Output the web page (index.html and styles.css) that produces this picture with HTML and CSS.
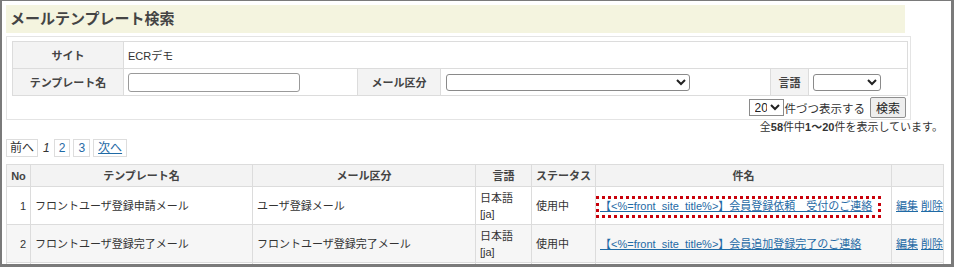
FILE: index.html
```html
<!DOCTYPE html>
<html lang="ja">
<head>
    <meta charset="UTF-8">
    <title>メールテンプレート検索</title>
    <link rel="stylesheet" href="styles.css">
</head>
<body>
    <div class="frame">
        <h1 class="page-title">メールテンプレート検索</h1>

        <div class="search-box">
            <table class="search-table">
                <colgroup>
                    <col class="w-name">
                    <col class="w-input">
                    <col class="w-kind">
                    <col class="w-kind-sel">
                    <col class="w-lang">
                    <col class="w-lang-sel">
                </colgroup>
                <tr>
                    <th>サイト</th>
                    <td colspan="5">ECRデモ</td>
                </tr>
                <tr>
                    <th>テンプレート名</th>
                    <td><input type="text" class="text-input"></td>
                    <th>メール区分</th>
                    <td><select class="kind-select"><option></option></select></td>
                    <th>言語</th>
                    <td><select class="lang-select"><option></option></select></td>
                </tr>
            </table>
            <div class="search-actions">
                <select class="count-select"><option>20</option></select><span>件づつ表示する</span>
                <button class="search-button">検索</button>
            </div>
        </div>

        <p class="result-count">全<b>58</b>件中<b>1～20</b>件を表示しています。</p>

        <div class="pager">
            <span class="page-box">前へ</span>
            <span class="page-current">1</span>
            <a class="page-box" href="#">2</a>
            <a class="page-box" href="#">3</a>
            <a class="page-box next" href="#">次へ</a>
        </div>

        <table class="list">
            <colgroup>
                <col class="c-no">
                <col class="c-name">
                <col class="c-kind">
                <col class="c-lang">
                <col class="c-status">
                <col class="c-subject">
                <col class="c-ops">
            </colgroup>
            <tr>
                <th>No</th>
                <th>テンプレート名</th>
                <th>メール区分</th>
                <th>言語</th>
                <th>ステータス</th>
                <th>件名</th>
                <th></th>
            </tr>
            <tr>
                <td class="num">1</td>
                <td>フロントユーザ登録申請メール</td>
                <td>ユーザ登録メール</td>
                <td>日本語<br>[ja]</td>
                <td>使用中</td>
                <td class="subject"><a href="#">【&lt;%=front_site_title%&gt;】会員登録依頼　受付のご連絡</a><span class="highlight"></span></td>
                <td class="ops"><a href="#">編集</a> <a href="#">削除</a></td>
            </tr>
            <tr class="even">
                <td class="num">2</td>
                <td>フロントユーザ登録完了メール</td>
                <td>フロントユーザ登録完了メール</td>
                <td>日本語<br>[ja]</td>
                <td>使用中</td>
                <td class="subject"><a href="#">【&lt;%=front_site_title%&gt;】会員追加登録完了のご連絡</a></td>
                <td class="ops"><a href="#">編集</a> <a href="#">削除</a></td>
            </tr>
            <tr>
                <td></td>
                <td></td>
                <td></td>
                <td></td>
                <td></td>
                <td></td>
                <td></td>
            </tr>
        </table>
    </div>
</body>
</html>
```

FILE: styles.css
```css
body {
    margin: 0;
    font-family: "Liberation Sans", "Noto Sans CJK JP", sans-serif;
    font-size: 11px;
    color: #333;
    background: #fff;
}
.frame {
    width: 954px;
    height: 267px;
    box-sizing: border-box;
    border-style: solid;
    border-color: #7a7a7a;
    border-width: 1px 3px 3px 2px;
    padding: 4px 0 0 4px;
    overflow: hidden;
}
a {
    color: #1f6aa5;
}
.page-title {
    margin: 0;
    width: 895px;
    height: 28px;
    line-height: 28px;
    padding-left: 4px;
    background: #f4f4df;
    color: #444;
    font-size: 15px;
    font-weight: bold;
}
.search-box {
    margin-top: 3px;
    width: 893px;
    height: 78px;
    border: 1px solid #e4e4e4;
    padding: 4px 5px 0 5px;
}
.search-table {
    width: 895px;
    border-collapse: collapse;
    table-layout: fixed;
}
.search-table th,
.search-table td {
    height: 26px;
    border: 1px solid #dcdcdc;
    padding: 0 4px;
}
.search-table th {
    background: #f3f3f3;
    color: #444;
    font-weight: bold;
    text-align: center;
}
.w-name { width: 111px; }
.w-input { width: 234px; }
.w-kind { width: 83px; }
.w-kind-sel { width: 330px; }
.w-lang { width: 38px; }
.w-lang-sel { width: 99px; }
.text-input {
    width: 172px;
    height: 19px;
    box-sizing: border-box;
    border: 1px solid #9a9a9a;
    border-radius: 3px;
    margin: 0;
    display: block;
}
.kind-select,
.lang-select,
.count-select {
    height: 17px;
    background: #fff;
    border: 1px solid #8a8a8a;
    border-radius: 3px;
    color: #222;
}
.kind-select {
    width: 244px;
    font-size: 11px;
    margin: 0 0 0 1px;
    display: block;
}
.lang-select {
    width: 68px;
    font-size: 11px;
    margin: 0;
    display: block;
}
.search-actions {
    display: flex;
    justify-content: flex-end;
    align-items: center;
    width: 894px;
    margin-top: 1px;
    font-size: 11.5px;
    color: #333;
}
.count-select {
    flex-shrink: 0;
    width: 35px;
    font-size: 12px;
    padding: 0 0 0 1px;
    margin: 0 1px 0 0;
    border-radius: 0;
}
.search-button {
    margin-left: 5px;
    height: 21px;
    width: 36px;
    padding: 0;
    font-family: inherit;
    font-size: 12px;
    color: #222;
    background: #eee;
    border: 1px solid #8f8f8f;
    border-radius: 2px;
}
.result-count {
    margin: 0;
    width: 937px;
    text-align: right;
    line-height: 14px;
    color: #333;
}
.pager {
    display: flex;
    align-items: center;
    gap: 3px;
    margin-top: 5px;
    height: 18px;
    font-size: 12px;
}
.page-box {
    display: inline-block;
    border: 1px solid #ddd;
    padding: 0 3px;
    line-height: 16px;
    text-decoration: none;
    color: #333;
}
a.page-box {
    color: #1f6aa5;
    padding: 0 4px;
}
.page-box.next {
    text-decoration: underline;
}
.page-current {
    font-style: italic;
    padding: 0 1px 0 2px;
}
.list {
    margin-top: 7px;
    width: 937px;
    border-collapse: collapse;
    table-layout: fixed;
}
.c-no { width: 24px; }
.c-name { width: 222px; }
.c-kind { width: 223px; }
.c-lang { width: 56px; }
.c-status { width: 64px; }
.c-subject { width: 296px; }
.c-ops { width: 52px; }
.list th,
.list td {
    border: 1px solid #dcdcdc;
    padding: 2px 4px;
    line-height: 16px;
    text-align: left;
}
.list th {
    height: 17px;
    background: #f3f3f3;
    color: #444;
    font-weight: bold;
    text-align: center;
}
.list td {
    height: 33px;
}
.list tr.even td {
    background: #f6f6f6;
}
.list td.num {
    text-align: right;
}
.subject {
    position: relative;
    white-space: nowrap;
}
.highlight {
    position: absolute;
    left: 0;
    top: 9px;
    width: 279px;
    height: 16px;
    border: 3px dotted #c8000a;
}
.ops {
    white-space: nowrap;
}
```
